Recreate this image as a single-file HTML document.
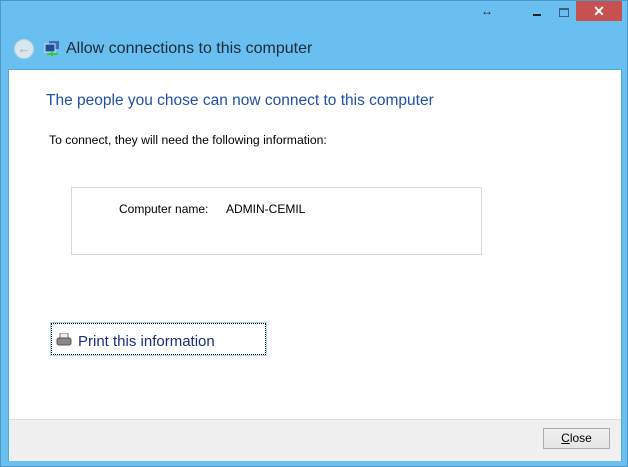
<!DOCTYPE html>
<html><head><style>
body{margin:0;width:628px;height:467px;overflow:hidden;font-family:"Liberation Sans",sans-serif;}
.win{position:absolute;left:0;top:0;width:626px;height:465px;background:#69bff0;border:1px solid #4a98c8;}
.client{position:absolute;left:7px;top:68px;width:612px;height:390px;background:#fff;border:1px solid #5aa8d8;}
.footer{position:absolute;left:0;top:349px;width:612px;height:41px;background:#f0f0f0;border-top:1px solid #dfdfdf;}
.abs{position:absolute;white-space:nowrap;}
</style></head><body>
<div class="win">
 <div class="abs" style="left:575px;top:0;width:46px;height:20px;background:#c75050;color:#fff;font-size:14px;font-weight:bold;text-align:center;line-height:20px;">✕</div>
 <div class="abs" style="left:532px;top:13px;width:8px;height:2px;background:#222;"></div>
 <div class="abs" style="left:558px;top:7px;width:8px;height:6px;border:1px solid #3b5f80;border-top-width:2px;"></div>
 <div class="abs" style="left:480px;top:3px;font-size:12px;color:#222;font-weight:bold;">↔</div>
 <div class="abs" style="left:13px;top:38px;width:18px;height:18px;border-radius:50%;background:#d8e6f0;border:1px solid #b8d0e0;color:#9ab;font-size:13px;line-height:18px;text-align:center;">←</div>
 <svg class="abs" style="left:43px;top:40px" width="17" height="16"><rect x="5" y="0" width="10" height="8" fill="#3a6fb8"/><rect x="1" y="3" width="10" height="8" fill="#1a4e9a" stroke="#ddd"/><rect x="3" y="12" width="11" height="2" fill="#3c3"/><rect x="7" y="11" width="2" height="4" fill="#3c3"/></svg>
 <div class="abs" style="left:65px;top:39px;font-size:16px;color:#1e2a38;">Allow connections to this computer</div>
 <div class="client">
  <div class="abs" style="left:37px;top:22px;font-size:15.5px;color:#1e50a8;">The people you chose can now connect to this computer</div>
  <div class="abs" style="left:40px;top:63px;font-size:12.2px;color:#000;">To connect, they will need the following information:</div>
  <div class="abs" style="left:62px;top:117px;width:409px;height:66px;border:1px solid #d8d8d8;"></div>
  <div class="abs" style="left:110px;top:132px;font-size:12px;">Computer name:</div>
  <div class="abs" style="left:217px;top:132px;font-size:12px;">ADMIN-CEMIL</div>
  <div class="abs" style="left:41px;top:252px;width:215px;height:32px;border:1px solid #9edcf0;"><div style="position:absolute;left:0;top:0;right:0;bottom:0;border:1px dotted #000;"></div></div>
  <svg class="abs" style="left:47px;top:263px" width="16" height="14"><rect x="4" y="0" width="8" height="5" fill="#eee" stroke="#777"/><rect x="1" y="5" width="14" height="7" rx="2" fill="#888" stroke="#555"/></svg>
  <div class="abs" style="left:69px;top:263px;font-size:15px;color:#1a2f7a;">Print this information</div>
  <div class="footer">
   <div class="abs" style="left:534px;top:8px;width:65px;height:19px;border:1px solid #acacac;background:linear-gradient(#f0f0f0,#e5e5e5);font-size:12px;text-align:center;line-height:19px;"><u>C</u>lose</div>
  </div>
 </div>
</div>
</body></html>
